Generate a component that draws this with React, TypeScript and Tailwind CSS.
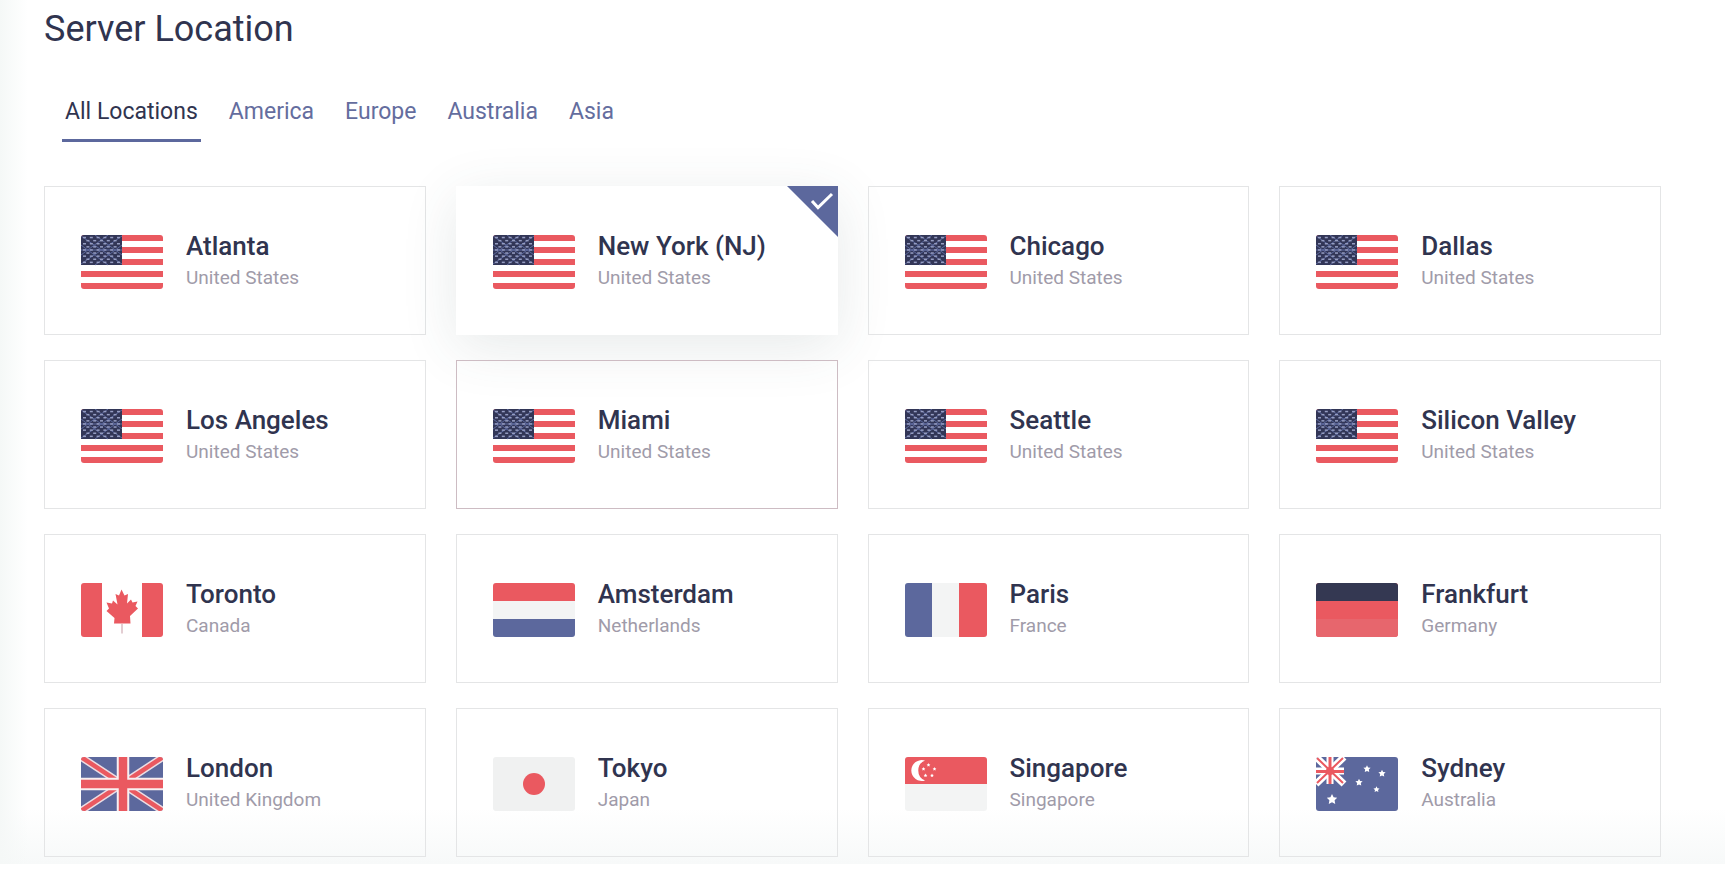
import { useState } from "react";
import type { ReactNode } from "react";

const RED = "#ea5960";
const BLUE = "#5c689d";
const NAVY = "#343852";
const PALE = "#f3f4f4";

function Star({ cx, cy, r }: { cx: number; cy: number; r: number }) {
  const points = Array.from({ length: 10 }, (_, i) => {
    const radius = i % 2 === 0 ? r : r * 0.5;
    const angle = (Math.PI / 5) * i - Math.PI / 2;
    return `${cx + radius * Math.cos(angle)},${cy + radius * Math.sin(angle)}`;
  }).join(" ");
  return <polygon points={points} fill="#fff" />;
}

function UnitedStates() {
  const stars: ReactNode[] = [];
  for (let row = 0; row < 9; row++) {
    for (let col = 0; col < (row % 2 ? 5 : 6); col++) {
      stars.push(
        <rect key={`${row}-${col}`} x={2 + col * 6.8 + (row % 2 ? 3.4 : 0)} y={1.8 + row * 3.1} width="3" height="1.5" fill="#969dc2" />,
      );
    }
  }
  return (
    <>
      <rect width="82" height="54" fill="#fff" />
      {[0, 12, 24, 36, 48].map((y) => (
        <rect key={y} y={y} width="82" height="6" fill={RED} />
      ))}
      <rect width="41" height="30" fill="#323657" />
      <path d="M0 1 L41 29 M0 29 L41 1 M0 15 H41 M14 0 L41 20 M27 0 L0 20 M0 10 L27 30 M41 10 L14 30" stroke={BLUE} strokeWidth="1" />
      {stars}
    </>
  );
}

function Canada() {
  return (
    <>
      <rect width="82" height="54" fill="#fff" />
      <rect width="21" height="54" fill={RED} />
      <rect x="61" width="21" height="54" fill={RED} />
      <path
        d="M40.5 6.5 L43.5 12.5 L47 11 L46 20.5 L50 16.5 L51.5 19.5 L56.5 18.5 L54.5 23 L57 25.5 L49 33 L49.5 40.5 L33 40.5 L33.5 35 L25.5 28 L28 25.5 L25.5 19.5 L31 20.5 L32 17.5 L36.5 21.5 L34.5 11 L38 12.5 Z"
        fill={RED}
      />
      <rect x="40" y="41" width="2" height="9.5" fill="#e3cdd2" />
    </>
  );
}

function Netherlands() {
  return (
    <>
      <rect width="82" height="54" fill={PALE} />
      <rect width="82" height="18" fill={RED} />
      <rect y="36" width="82" height="18" fill={BLUE} />
    </>
  );
}

function France() {
  return (
    <>
      <rect width="82" height="54" fill={PALE} />
      <rect width="27" height="54" fill={BLUE} />
      <rect x="54" width="28" height="54" fill={RED} />
    </>
  );
}

function Germany() {
  return (
    <>
      <rect width="82" height="54" fill={RED} />
      <rect width="82" height="18" fill={NAVY} />
      <rect y="36" width="82" height="18" fill="#e7666d" />
    </>
  );
}

function UnitedKingdom() {
  return (
    <>
      <rect width="82" height="54" fill={BLUE} />
      <path d="M0 0 L82 54 M82 0 L0 54" stroke="#ecdde3" strokeWidth="7.5" />
      <path d="M0 0 L82 54 M82 0 L0 54" stroke={RED} strokeWidth="4.5" />
      <path d="M42 0 V54 M0 27 H82" stroke="#f8eff1" strokeWidth="12.5" />
      <path d="M42 0 V54 M0 27 H82" stroke={RED} strokeWidth="8.5" />
    </>
  );
}

function Japan() {
  return (
    <>
      <rect width="82" height="54" fill="#f0f1f1" />
      <circle cx="41" cy="27" r="11" fill={RED} />
    </>
  );
}

function Singapore() {
  return (
    <>
      <rect width="82" height="54" fill={PALE} />
      <rect width="82" height="27" fill={RED} />
      <path d="M20 3.5 A10.5 10.5 0 1 0 20 23.5 A10.8 10.8 0 0 1 20 3.5 Z" fill="#fff" />
      {[[23.5, 8], [18.5, 12], [29.5, 12], [20.5, 18.5], [27, 18.5]].map(([x, y]) => (
        <Star key={`${x}-${y}`} cx={x} cy={y} r={2} />
      ))}
    </>
  );
}

function Australia() {
  return (
    <>
      <rect width="82" height="54" fill={BLUE} />
      <path d="M0 0 L28 27 M28 0 L0 27" stroke="#fff" strokeWidth="7" />
      <path d="M14 0 V27 M0 14 H28" stroke="#fff" strokeWidth="7" />
      <path d="M1 1 L27 26 M27 1 L1 26" stroke={RED} strokeWidth="2" />
      <path d="M14 0 V27 M0 14.5 H28" stroke={RED} strokeWidth="3" />
      <circle cx="14" cy="14" r="4" fill={RED} />
      <Star cx={16} cy={42.5} r={5.5} />
      <Star cx={51} cy={12} r={3.8} />
      <Star cx={66} cy={16.5} r={3.8} />
      <Star cx={43} cy={25.5} r={3.8} />
      <Star cx={60.5} cy={32.5} r={3.2} />
    </>
  );
}

const flags: Record<string, () => ReactNode> = {
  "United States": UnitedStates,
  Canada,
  Netherlands,
  France,
  Germany,
  "United Kingdom": UnitedKingdom,
  Japan,
  Singapore,
  Australia,
};

const regions = ["All Locations", "America", "Europe", "Australia", "Asia"];

const locations = [
  { city: "Atlanta", country: "United States", region: "America" },
  { city: "New York (NJ)", country: "United States", region: "America" },
  { city: "Chicago", country: "United States", region: "America" },
  { city: "Dallas", country: "United States", region: "America" },
  { city: "Los Angeles", country: "United States", region: "America" },
  { city: "Miami", country: "United States", region: "America", highlighted: true },
  { city: "Seattle", country: "United States", region: "America" },
  { city: "Silicon Valley", country: "United States", region: "America" },
  { city: "Toronto", country: "Canada", region: "America" },
  { city: "Amsterdam", country: "Netherlands", region: "Europe" },
  { city: "Paris", country: "France", region: "Europe" },
  { city: "Frankfurt", country: "Germany", region: "Europe" },
  { city: "London", country: "United Kingdom", region: "Europe" },
  { city: "Tokyo", country: "Japan", region: "Asia" },
  { city: "Singapore", country: "Singapore", region: "Asia" },
  { city: "Sydney", country: "Australia", region: "Australia" },
];

type Location = (typeof locations)[number];

function LocationCard({ location, selected, onSelect }: { location: Location; selected: boolean; onSelect: () => void }) {
  const Flag = flags[location.country];
  const look = selected
    ? "border-white bg-white shadow-[0_12px_56px_rgba(60,80,80,0.12)]"
    : location.highlighted
      ? "border-[#cdbcc3]"
      : "border-[#e4e5e6]";
  return (
    <button
      type="button"
      aria-pressed={selected}
      onClick={onSelect}
      className={`relative flex h-[149px] cursor-pointer items-center gap-[23px] border pl-9 text-left ${look}`}
    >
      <svg viewBox="0 0 82 54" aria-hidden="true" className="mt-[3px] h-[54px] w-[82px] shrink-0 rounded-[3px]">
        <Flag />
      </svg>
      <span className="mt-[3px] flex flex-col">
        <span className="text-[26px] leading-8 font-medium text-[#30344f]">{location.city}</span>
        <span className="text-[19px] leading-8 text-[#a09ba9]">{location.country}</span>
      </span>
      {selected && (
        <svg viewBox="0 0 51 51" aria-hidden="true" className="absolute -top-px -right-px size-[51px]">
          <path d="M0 0 H51 V51 Z" fill={BLUE} />
          <path d="M25 15 L31 21.5 L45 8" fill="none" stroke="#fff" strokeWidth="3" />
        </svg>
      )}
    </button>
  );
}

export default function App() {
  const [region, setRegion] = useState("All Locations");
  const [selectedCity, setSelectedCity] = useState("New York (NJ)");
  const visible = locations.filter((l) => region === "All Locations" || l.region === region);

  return (
    <div className="min-h-screen bg-white pb-6 font-[Roboto,sans-serif]">
      <main className="bg-[linear-gradient(to_right,#f5f8f7,transparent_28px),linear-gradient(to_top,#f7f9f9,transparent_56px)] pt-[9px] pr-16 pb-[7px] pl-11">
        <h1 className="text-4xl leading-10 text-[#30344f]">Server Location</h1>
        <nav aria-label="Regions" className="mt-12 mb-11 flex gap-[25px] pl-[18px]">
          {regions.map((name) => (
            <button
              key={name}
              type="button"
              aria-pressed={region === name}
              onClick={() => setRegion(name)}
              className={`h-[45px] cursor-pointer border-b-3 px-[3px] pb-3 text-[23px] leading-[30px] ${
                region === name ? "border-[#5c689d] text-[#30344f]" : "border-transparent text-[#646d9e]"
              }`}
            >
              {name}
            </button>
          ))}
        </nav>
        <div className="grid grid-cols-4 gap-x-[30px] gap-y-[25px]">
          {visible.map((location) => (
            <LocationCard
              key={location.city}
              location={location}
              selected={location.city === selectedCity}
              onSelect={() => setSelectedCity(location.city)}
            />
          ))}
        </div>
      </main>
    </div>
  );
}
